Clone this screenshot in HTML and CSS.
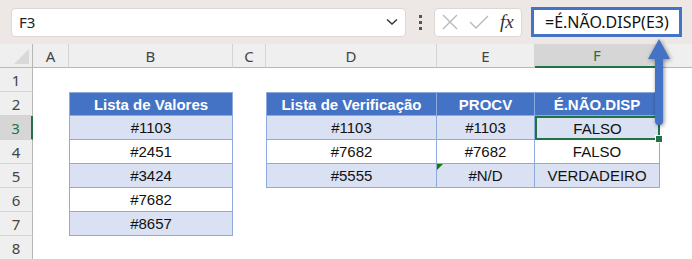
FILE: index.html
```html
<!DOCTYPE html>
<html lang="pt">
<head>
    <meta charset="UTF-8">
    <title>É.NÃO.DISP</title>
    <link rel="stylesheet" href="styles.css">
</head>
<body>
<div id="page">
    <div class="toolbar">
        <div class="namebox">
            <span>F3</span>
            <svg class="chev" width="12" height="8" viewBox="0 0 12 8"><path d="M1 1.5 L6 6 L11 1.5" fill="none" stroke="#333" stroke-width="1.4"/></svg>
        </div>
        <div class="dots"><i></i><i></i><i></i></div>
        <div class="fxbox">
            <svg width="18" height="16" viewBox="0 0 18 16"><path d="M2 1 L16 15 M16 1 L2 15" stroke="#b9b9b9" stroke-width="1.4"/></svg>
            <svg width="20" height="14" viewBox="0 0 20 14"><path d="M1 7 L7 13 L19 1" fill="none" stroke="#b9b9b9" stroke-width="1.4"/></svg>
            <span class="fx">fx</span>
        </div>
        <div class="formula">=É.NÃO.DISP(E3)</div>
    </div>

    <div class="sheet">
        <div class="corner"><span></span></div>
        <div class="colh">A</div>
        <div class="colh">B</div>
        <div class="colh">C</div>
        <div class="colh">D</div>
        <div class="colh">E</div>
        <div class="colh active">F</div>
        <div class="colh last"></div>

        <!-- linha 1 -->
        <div class="rowh">1</div>
        <div></div><div></div><div></div><div></div><div></div><div></div><div></div>

        <!-- linha 2 -->
        <div class="rowh">2</div>
        <div></div>
        <div class="c head first top">Lista de Valores</div>
        <div></div>
        <div class="c head first top">Lista de Verificação</div>
        <div class="c head top">PROCV</div>
        <div class="c head top">É.NÃO.DISP</div>
        <div></div>

        <!-- linha 3 -->
        <div class="rowh active">3</div>
        <div></div>
        <div class="c band first">#1103</div>
        <div></div>
        <div class="c band first">#1103</div>
        <div class="c band">#1103</div>
        <div class="c band sel">FALSO<span class="handle"></span></div>
        <div></div>

        <!-- linha 4 -->
        <div class="rowh">4</div>
        <div></div>
        <div class="c first">#2451</div>
        <div></div>
        <div class="c first">#7682</div>
        <div class="c">#7682</div>
        <div class="c">FALSO</div>
        <div></div>

        <!-- linha 5 -->
        <div class="rowh">5</div>
        <div></div>
        <div class="c band first">#3424</div>
        <div></div>
        <div class="c band first">#5555</div>
        <div class="c band err">#N/D</div>
        <div class="c band">VERDADEIRO</div>
        <div></div>

        <!-- linha 6 -->
        <div class="rowh">6</div>
        <div></div>
        <div class="c first">#7682</div>
        <div></div><div></div><div></div><div></div><div></div>

        <!-- linha 7 -->
        <div class="rowh">7</div>
        <div></div>
        <div class="c band first">#8657</div>
        <div></div><div></div><div></div><div></div><div></div>

        <!-- linha 8 -->
        <div class="rowh">8</div>
        <div></div><div></div><div></div><div></div><div></div><div></div><div></div>
    </div>

    <svg class="arrow" width="30" height="92" viewBox="0 0 30 92">
        <path d="M15 2 L26 22 L19 22 L19 84 Q19 88 15 88 Q11 88 11 84 L11 22 L4 22 Z" fill="#4472c4"/>
    </svg>
</div>
</body>
</html>
```

FILE: styles.css
```css
*{
    margin: 0;
    padding: 0;
    box-sizing: border-box;
}
body{
    width: 692px;
    height: 259px;
    overflow: hidden;
    background: #fff;
    font-family: "Liberation Sans", Arial, sans-serif;
}
#page{
    position: relative;
    height: 259px;
}

/* barra de fórmulas */
.toolbar{
    height: 44px;
    background: #ede8e6;
    display: flex;
    align-items: center;
    padding-left: 11px;
}
.namebox{
    width: 395px;
    height: 29px;
    background: #fff;
    border: 1px solid #dcd6d4;
    border-radius: 4px;
    display: flex;
    align-items: center;
    justify-content: space-between;
    padding: 0 7px 0 7px;
    font-family: "Noto Sans", sans-serif;
    font-size: 15px;
    color: #222;
}
.dots{
    margin-left: 13px;
    display: flex;
    flex-direction: column;
    gap: 3px;
}
.dots i{
    display: block;
    width: 3px;
    height: 3px;
    background: #555;
}
.fxbox{
    margin-left: 12px;
    width: 88px;
    height: 29px;
    background: #fff;
    border: 1px solid #dcd6d4;
    border-radius: 4px;
    display: flex;
    align-items: center;
    padding-left: 6px;
    gap: 10px;
}
.fx{
    font-family: "Liberation Serif", serif;
    font-style: italic;
    font-size: 19px;
    color: #333;
    margin-left: 1px;
}
.formula{
    margin-left: 9px;
    width: 151px;
    height: 30px;
    background: #fff;
    border: 3px solid #4472c4;
    font-family: "Noto Sans", sans-serif;
    font-size: 16px;
    color: #111;
    line-height: 24px;
    padding-left: 11px;
}

/* grade */
.sheet{
    display: grid;
    grid-template-columns: 33px 36px 164px 33px 171px 98px 125px 1fr;
    grid-template-rows: 24px repeat(8, 24px);
}
.corner{
    background: #efefef;
    border-right: 1px solid #b7b7b7;
    border-bottom: 1px solid #b7b7b7;
    position: relative;
}
.corner span{
    position: absolute;
    right: 3px;
    bottom: 3px;
    width: 0;
    height: 0;
    border-left: 15px solid transparent;
    border-bottom: 15px solid #d9d9d9;
}
.colh, .rowh{
    background: #efefef;
    font-family: "Noto Sans", sans-serif;
    font-size: 15px;
    color: #444;
    display: flex;
    align-items: center;
    justify-content: center;
}
.colh{
    border-right: 1px solid #d4d4d4;
    border-bottom: 1px solid #b7b7b7;
}
.colh.last{
    border-right: none;
}
.colh.active{
    background: #d6d6d6;
    color: #217346;
    border-bottom: 2px solid #217346;
}
.rowh{
    border-right: 1px solid #b7b7b7;
    border-bottom: 1px solid #d4d4d4;
}
.rowh.active{
    background: #d6d6d6;
    color: #217346;
    border-right: 2px solid #217346;
}

/* tabelas */
.c{
    display: flex;
    align-items: center;
    justify-content: center;
    font-size: 15px;
    color: #111;
    border-right: 1px solid #8ea9db;
    border-bottom: 1px solid #8ea9db;
}
.c.first{
    border-left: 1px solid #8ea9db;
}
.c.top{
    border-top: 1px solid #8ea9db;
}
.c.head{
    background: #4472c4;
    color: #fff;
    font-weight: bold;
}
.c.band{
    background: #d9e1f2;
}
.c.sel{
    position: relative;
    border: 2px solid #217346;
}
.handle{
    position: absolute;
    right: -4px;
    bottom: -4px;
    width: 6px;
    height: 6px;
    background: #217346;
    outline: 1px solid #fff;
}
.c.err{
    position: relative;
}
.c.err::before{
    content: "";
    position: absolute;
    left: 0;
    top: 0;
    border-top: 6px solid #107c10;
    border-right: 6px solid transparent;
}

/* seta */
.arrow{
    position: absolute;
    left: 644px;
    top: 37px;
    filter: drop-shadow(1px 1px 2px rgba(0,0,0,0.45));
}
```
